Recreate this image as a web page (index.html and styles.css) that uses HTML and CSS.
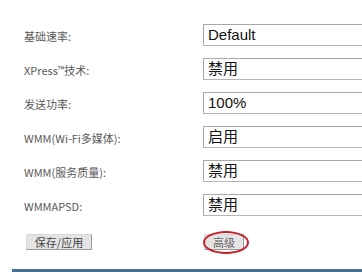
FILE: index.html
```html
<!DOCTYPE html>
<html>
<head>
<meta charset="utf-8">
<link rel="stylesheet" href="styles.css">
</head>
<body>
<div class="page">
  <div class="form">
    <div class="row"><span class="label">基础速率:</span><span class="field">Default</span></div>
    <div class="row"><span class="label">XPress<span class="tm">™</span>技术:</span><span class="field">禁用</span></div>
    <div class="row"><span class="label">发送功率:</span><span class="field">100%</span></div>
    <div class="row"><span class="label">WMM(Wi-Fi多媒体):</span><span class="field">启用</span></div>
    <div class="row"><span class="label">WMM(服务质量):</span><span class="field">禁用</span></div>
    <div class="row"><span class="label">WMMAPSD:</span><span class="field">禁用</span></div>
  </div>
  <div class="actions">
    <span class="btn btn-save">保存/应用</span>
    <span class="adv-wrap"><span class="btn btn-adv">高级</span><span class="circle"></span></span>
  </div>
  <div class="rule"></div>
</div>
</body>
</html>
```
FILE: styles.css
```css
html, body {
  margin: 0;
  padding: 0;
  background: #fff;
  overflow: hidden;
}
.page {
  width: 362px;
  height: 272px;
  position: relative;
  overflow: hidden;
  font-family: "Noto Sans CJK SC", "DejaVu Sans", sans-serif;
}
.form {
  padding-top: 24px;
  padding-left: 24px;
  display: flex;
  flex-direction: column;
  gap: 12px;
}
.row {
  display: flex;
  align-items: center;
  height: 22px;
}
.label {
  width: 179px;
  flex: none;
  font-size: 11px;
  color: #5a5a5a;
  line-height: 14px;
  padding-top: 2px;
}
.tm {
  font-size: 9px;
  vertical-align: 2px;
}
.field {
  flex: 1;
  min-width: 0;
  height: 20px;
  border: 1px solid #b4b4b4;
  border-right: none;
  border-top-color: #a8a8a8;
  border-left-color: #a8a8a8;
  font-family: "Liberation Sans", "Noto Sans CJK SC", sans-serif;
  font-size: 15px;
  line-height: 20px;
  color: #111;
  padding-left: 4px;
}
.actions {
  display: flex;
  align-items: center;
  padding-left: 26px;
  margin-top: 18px;
  height: 16px;
}
.btn {
  display: inline-flex;
  align-items: center;
  justify-content: center;
  height: 14px;
  background: #e4e4e4;
  border: 1px solid #9a9a9a;
  border-top-color: #d8d8d8;
  border-left-color: #d8d8d8;
  font-size: 11px;
  color: #444;
  line-height: 14px;
}
.btn-save {
  width: 64px;
}
.adv-wrap {
  position: relative;
  margin-left: 112px;
  display: inline-flex;
}
.btn-adv {
  width: 38px;
  color: #666;
}
.circle {
  position: absolute;
  left: -1px;
  top: -3px;
  width: 42px;
  height: 19px;
  border: 2px solid #c4232c;
  border-radius: 50%;
}
.rule {
  position: absolute;
  left: 12px;
  right: 0;
  top: 269px;
  height: 3px;
  background: #456f92;
}
```
